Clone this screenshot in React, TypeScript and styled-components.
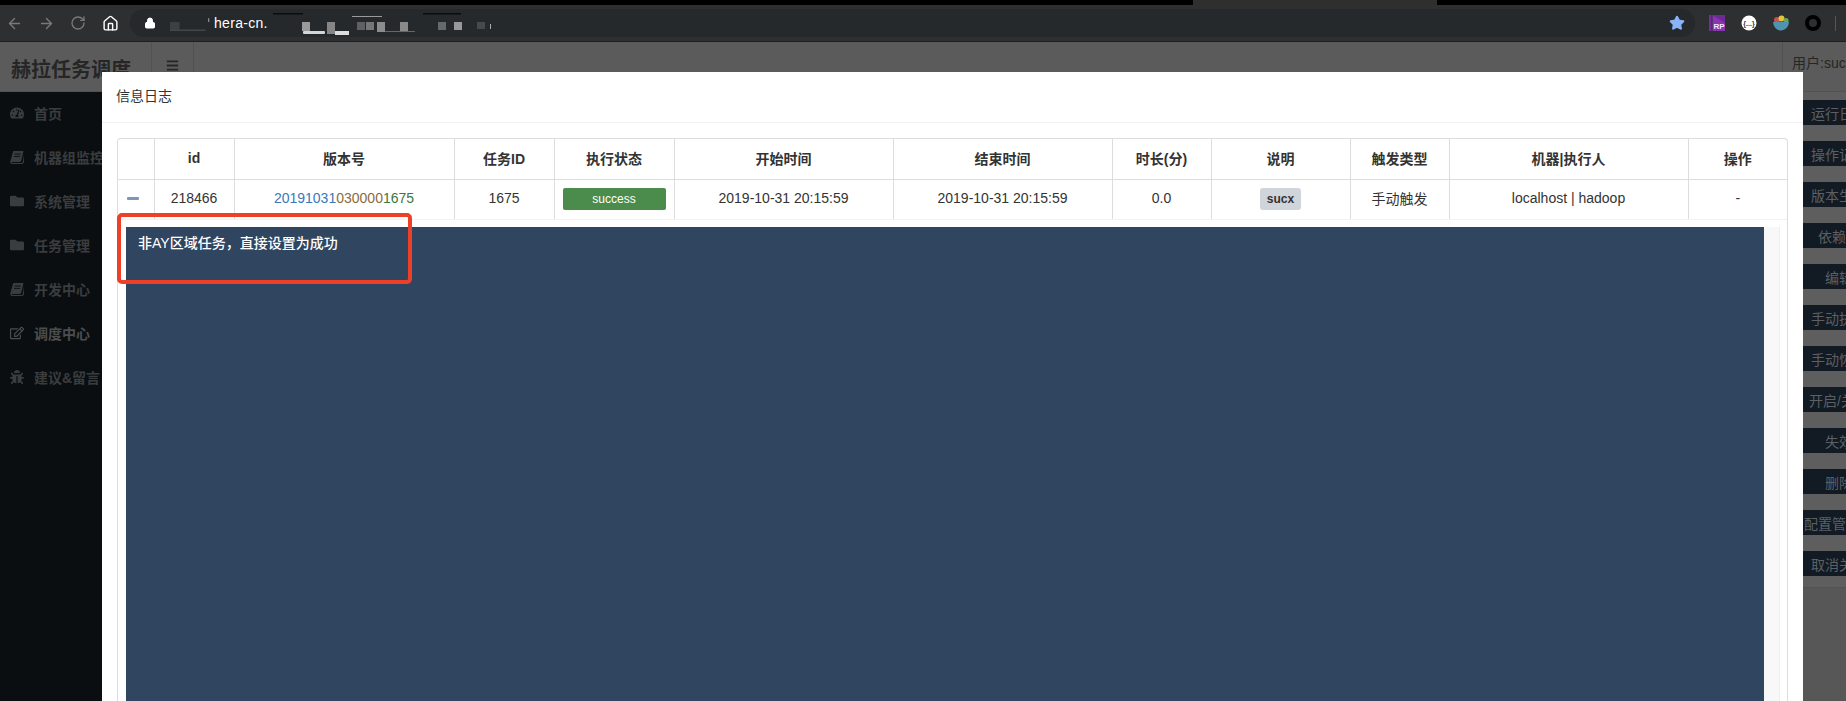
import styled, { createGlobalStyle } from 'styled-components';
import { ArrowLeft, ArrowRight, RotateCw, Home, Lock, Star } from 'lucide-react';
import { FaTachometerAlt, FaFolder, FaRegEdit, FaBug, FaBars } from 'react-icons/fa';
import type { ReactNode } from 'react';

const GlobalStyle = createGlobalStyle`
  html, body {
    margin: 0;
    padding: 0;
    background: #575757;
    overflow: hidden;
  }
  * {
    box-sizing: border-box;
  }
`;

const FONT = `"Liberation Sans", "Noto Sans CJK SC", Arial, sans-serif`;

const Screen = styled.div`
  position: relative;
  width: 1846px;
  height: 701px;
  overflow: hidden;
  display: flex;
  flex-direction: column;
  font-family: ${FONT};
  font-size: 14px;
`;

/* browser chrome */
const TabStrip = styled.div`
  height: 5px;
  display: flex;
  background: #000;
`;
const ActiveTab = styled.div`
  width: 244px;
  margin-left: 1193px;
  background: #2f2f2e;
`;
const Toolbar = styled.div`
  height: 37px;
  display: flex;
  align-items: center;
  padding: 0 10px 0 6px;
  background: #2e2f31;
  border-bottom: 1px solid #1d1e1f;
`;
const NavButton = styled.span<{ $on?: boolean }>`
  width: 17px;
  height: 17px;
  margin-right: 15px;
  display: flex;
  color: ${(p) => (p.$on ? '#fff' : '#77797b')};
`;
const UrlBar = styled.div`
  flex: 1;
  height: 28px;
  margin-left: -4px;
  padding: 0 10px 0 13px;
  display: flex;
  align-items: center;
  background: #25292c;
  border-radius: 14px;
  color: #fff;
  font-size: 14px;
  letter-spacing: 0.3px;
`;
const LockIcon = styled(Lock)`
  margin-right: 14px;
  margin-left: 1px;
  fill: #fff;
`;
const UrlEnd = styled.span`
  margin-left: auto;
  display: flex;
`;
const Extensions = styled.div`
  margin-left: 14px;
  display: flex;
  align-items: center;
  gap: 16px;
`;
const ToolbarDivider = styled.span`
  width: 1px;
  height: 15px;
  margin-left: -2px;
  background: #55585a;
`;

/* page under the dialog, dimmed */
const TopBar = styled.header`
  height: 50px;
  display: flex;
  align-items: stretch;
  background: #5b5b5b;
  border-bottom: 1px solid #525252;
  color: #262626;
`;
const Brand = styled.div`
  width: 152px;
  padding: 4px 0 0 11px;
  display: flex;
  align-items: center;
  font-size: 20px;
  font-weight: 700;
  border-right: 1px solid #525252;
`;
const MenuToggle = styled.div`
  width: 42px;
  padding: 0 0 3px 14px;
  display: flex;
  align-items: center;
  border-right: 1px solid #525252;
`;
const UserInfo = styled.div`
  margin-left: auto;
  width: 64px;
  padding: 0 0 10px 9px;
  display: flex;
  align-items: center;
  border-left: 1px solid #525252;
  white-space: nowrap;
  overflow: hidden;
`;
const Body = styled.div`
  flex: 1;
  display: flex;
  min-height: 0;
`;
const Sidebar = styled.nav`
  width: 180px;
  background: #0a0e10;
`;
const SideItem = styled.div<{ $active?: boolean }>`
  height: 44px;
  padding: 0 0 2px 10px;
  display: flex;
  align-items: center;
  gap: 10px;
  font-weight: 700;
  white-space: nowrap;
  color: ${(p) => (p.$active ? '#4b4e50' : '#3a3d3f')};
`;
const Content = styled.main`
  flex: 1;
  background: #575757;
`;
const ActionPanel = styled.aside`
  width: 43px;
  height: 496px;
  padding-top: 8px;
  display: flex;
  flex-direction: column;
  gap: 16px;
  overflow: hidden;
  background: #5e5e5e;
  border-bottom: 1px solid #525252;
`;
const ActionButton = styled.div`
  flex: none;
  width: 72px;
  height: 25px;
  display: flex;
  align-items: center;
  justify-content: center;
  white-space: nowrap;
  background: #121a24;
  color: #5c6064;
`;

/* dialog */
const Modal = styled.section`
  position: absolute;
  left: 102px;
  top: 72px;
  width: 1701px;
  bottom: 0;
  display: flex;
  flex-direction: column;
  background: #fff;
`;
const ModalHeader = styled.div`
  height: 51px;
  padding: 0 14px 5px;
  display: flex;
  align-items: center;
  color: #333;
  border-bottom: 1px solid #f2f2f2;
`;
const ModalBody = styled.div`
  flex: 1;
  min-height: 0;
  padding: 15px 15px 0;
`;
const TableBox = styled.div`
  height: 100%;
  display: flex;
  flex-direction: column;
  border: 1px solid #ddd;
  border-bottom: 0;
  border-radius: 4px 4px 0 0;
`;
const LogTable = styled.table`
  width: 100%;
  table-layout: fixed;
  border-collapse: collapse;
  color: #333;
  text-align: center;
`;
const HeadCell = styled.th`
  height: 40px;
  padding: 0 0 2px;
  font-weight: 700;
  border-left: 1px solid #ddd;
  border-bottom: 1px solid #ddd;
  &:first-child {
    border-left: 0;
  }
`;
const Cell = styled.td`
  height: 40px;
  padding: 0 0 2px;
  border-left: 1px solid #ddd;
  border-bottom: 1px solid #f2f2f2;
  &:first-child {
    border-left: 0;
  }
`;
const CollapseIcon = styled.span`
  display: block;
  width: 12px;
  height: 3px;
  margin: 0 0 0 9px;
  border-radius: 1px;
  background: #7f95b5;
`;
const VersionPart = styled.span<{ $color: string }>`
  color: ${(p) => p.$color};
`;
const StatusBadge = styled.span`
  display: block;
  height: 22px;
  margin: 2px 8px 0;
  border-radius: 2px;
  background: #4b8b4b;
  color: #fff;
  font-size: 12px;
  line-height: 22px;
`;
const NoteBadge = styled.span`
  display: inline-block;
  height: 22px;
  margin-top: 2px;
  padding: 0 7px;
  border-radius: 3px;
  background: #d0d4db;
  color: #333;
  font-size: 12px;
  font-weight: 700;
  line-height: 22px;
`;
const DetailRow = styled.div`
  flex: 1;
  min-height: 0;
  padding: 7px 7px 0 8px;
  display: flex;
`;
const LogPanel = styled.pre`
  flex: 1;
  margin: 0;
  padding: 6px 12px;
  background: #304560;
  color: #fff;
  font-family: ${FONT};
  font-size: 14px;
  font-weight: 500;
  line-height: 20px;
`;
const ScrollGutter = styled.div`
  width: 16px;
  background: #f8f8f8;
  border-right: 1px solid #eeeeee;
`;
const Annotation = styled.div`
  position: absolute;
  left: 15px;
  top: 141px;
  width: 295px;
  height: 71px;
  border: 4px solid #ee4026;
  border-radius: 5px;
`;

const COLUMNS = [
  { title: '', width: 36 },
  { title: 'id', width: 80 },
  { title: '版本号', width: 220 },
  { title: '任务ID', width: 100 },
  { title: '执行状态', width: 120 },
  { title: '开始时间', width: 219 },
  { title: '结束时间', width: 219 },
  { title: '时长(分)', width: 99 },
  { title: '说明', width: 139 },
  { title: '触发类型', width: 99 },
  { title: '机器|执行人', width: 239 },
  { title: '操作', width: 99 },
];

const BookIcon = () => (
  <svg width="14" height="14" viewBox="0 0 14 14">
    <path
      d="M3.2 1h10.3l-2.2 9.6c-.2.9-.7 1.4-1.7 1.4H2.4c-.8 0-1 .9-.2.9h9.6c.5 0 .8-.3 1-.8L14 4.4v7.9l-.6.9c-.3.5-.8.8-1.5.8H2.2C.8 14 0 13 .3 11.6z"
      fill="currentColor"
    />
    <path d="M4.6 4h6.2M4 6.4h6.2" stroke="#0a0e10" strokeWidth="0.9" />
  </svg>
);

const SIDE_ITEMS: { label: string; icon: ReactNode; active?: boolean }[] = [
  { label: '首页', icon: <FaTachometerAlt size={14} /> },
  { label: '机器组监控', icon: <BookIcon /> },
  { label: '系统管理', icon: <FaFolder size={14} /> },
  { label: '任务管理', icon: <FaFolder size={14} /> },
  { label: '开发中心', icon: <BookIcon /> },
  { label: '调度中心', icon: <FaRegEdit size={14} />, active: true },
  { label: '建议&留言', icon: <FaBug size={14} /> },
];

const ACTIONS = [
  '运行日志',
  '操作记录',
  '版本生成',
  '依赖图',
  '编辑',
  '手动执行',
  '手动恢复',
  '开启/关闭',
  '失效',
  '删除',
  '配置管理员',
  '取消关注',
];

const UrlSmudgeLeft = () => (
  <svg width="44" height="28" viewBox="0 0 46 28">
    <rect x="0" y="13" width="10" height="8" fill="#3d4042" />
    <rect x="0" y="21" width="37" height="1" fill="#55585a" />
    <rect x="40" y="9" width="1" height="4" fill="#aaa" />
  </svg>
);

const UrlSmudgeRight = () => (
  <svg width="232" height="28" viewBox="0 0 222 28">
    <rect x="0" y="4" width="30" height="1.5" fill="#0b0c0d" />
    <rect x="29" y="13" width="8" height="9" fill="#9a9a9a" />
    <rect x="30" y="22" width="22" height="3" rx="1" fill="#d5d5d5" />
    <rect x="54" y="13" width="8" height="12" fill="#858585" />
    <rect x="62" y="22" width="14" height="4" fill="#dddddd" />
    <rect x="79" y="7" width="30" height="1" fill="#9a9a9a" />
    <rect x="84" y="13" width="8" height="8" fill="#5e6163" />
    <rect x="93" y="13" width="8" height="8" fill="#767676" />
    <rect x="104" y="13" width="8" height="10" fill="#8c8c8c" />
    <rect x="127" y="13" width="8" height="9" fill="#8a8a8a" />
    <rect x="112" y="22" width="30" height="1" fill="#666" />
    <rect x="150" y="4" width="38" height="1.5" fill="#0b0c0d" />
    <rect x="165" y="13" width="8" height="8" fill="#66696b" />
    <rect x="181" y="13" width="8" height="8" fill="#999" />
    <rect x="204" y="13" width="8" height="7" fill="#474a4c" />
    <rect x="217" y="15" width="1" height="5" fill="#aaa" />
  </svg>
);

const RpIcon = () => (
  <svg width="16" height="16" viewBox="0 0 16 16">
    <rect x="0" y="0" width="2.5" height="16" fill="#7a2a9e" />
    <rect x="3.5" y="0" width="12.5" height="16" fill="#8a34b4" />
    <path d="M3.5 0h12.5v8z" fill="#6d2a92" />
    <text x="4.5" y="14" fontFamily="Liberation Sans" fontSize="8" fontWeight="700" fill="#f3e6fa">
      RP
    </text>
  </svg>
);

const JsonIcon = () => (
  <svg width="16" height="16" viewBox="0 0 16 16">
    <circle cx="8" cy="8" r="7.5" fill="#fff" />
    <text x="8" y="10.5" textAnchor="middle" fontFamily="Liberation Sans" fontSize="7" fontWeight="700" fill="#333">
      {'{...}'}
    </text>
  </svg>
);

const BowlIcon = () => (
  <svg width="16" height="16" viewBox="0 0 16 16">
    <circle cx="4" cy="5" r="3" fill="#c8524a" />
    <circle cx="8.5" cy="3.5" r="3" fill="#e8c23f" />
    <circle cx="13" cy="5.5" r="2.6" fill="#6aa84f" />
    <path d="M0 7h16a8 8.5 0 0 1-16 0z" fill="#4f93ae" />
  </svg>
);

const RingIcon = () => (
  <svg width="16" height="16" viewBox="0 0 16 16">
    <circle cx="8" cy="8" r="6" fill="none" stroke="#000" strokeWidth="4" />
  </svg>
);

const App = () => {
  return (
    <Screen>
      <GlobalStyle />
      <TabStrip>
        <ActiveTab />
      </TabStrip>
      <Toolbar>
        <NavButton><ArrowLeft size={17} /></NavButton>
        <NavButton><ArrowRight size={17} /></NavButton>
        <NavButton><RotateCw size={16} /></NavButton>
        <NavButton $on><Home size={17} /></NavButton>
        <UrlBar>
          <LockIcon size={12} />
          <UrlSmudgeLeft />
          hera-cn.
          <UrlSmudgeRight />
          <UrlEnd>
            <Star size={16} fill="#8ab4f8" color="#8ab4f8" />
          </UrlEnd>
        </UrlBar>
        <Extensions>
          <RpIcon />
          <JsonIcon />
          <BowlIcon />
          <RingIcon />
          <ToolbarDivider />
        </Extensions>
      </Toolbar>

      <TopBar>
        <Brand>赫拉任务调度</Brand>
        <MenuToggle><FaBars size={13} /></MenuToggle>
        <UserInfo>用户:sucx</UserInfo>
      </TopBar>
      <Body>
        <Sidebar>
          {SIDE_ITEMS.map((item) => (
            <SideItem key={item.label} $active={item.active}>
              {item.icon}
              {item.label}
            </SideItem>
          ))}
        </Sidebar>
        <Content />
        <ActionPanel>
          {ACTIONS.map((label) => (
            <ActionButton key={label}>{label}</ActionButton>
          ))}
        </ActionPanel>
      </Body>

      <Modal>
        <ModalHeader>信息日志</ModalHeader>
        <ModalBody>
          <TableBox>
            <LogTable>
              <colgroup>
                {COLUMNS.map((col, i) => (
                  <col key={i} width={col.width} />
                ))}
              </colgroup>
              <thead>
                <tr>
                  {COLUMNS.map((col, i) => (
                    <HeadCell key={i}>{col.title}</HeadCell>
                  ))}
                </tr>
              </thead>
              <tbody>
                <tr>
                  <Cell><CollapseIcon /></Cell>
                  <Cell>218466</Cell>
                  <Cell>
                    <VersionPart $color="#3b78b8">20191031</VersionPart>
                    <VersionPart $color="#8a6d3b">030000</VersionPart>
                    <VersionPart $color="#3c763d">1675</VersionPart>
                  </Cell>
                  <Cell>1675</Cell>
                  <Cell><StatusBadge>success</StatusBadge></Cell>
                  <Cell>2019-10-31 20:15:59</Cell>
                  <Cell>2019-10-31 20:15:59</Cell>
                  <Cell>0.0</Cell>
                  <Cell><NoteBadge>sucx</NoteBadge></Cell>
                  <Cell>手动触发</Cell>
                  <Cell>localhost | hadoop</Cell>
                  <Cell>-</Cell>
                </tr>
              </tbody>
            </LogTable>
            <DetailRow>
              <LogPanel>非AY区域任务，直接设置为成功</LogPanel>
              <ScrollGutter />
            </DetailRow>
          </TableBox>
        </ModalBody>
        <Annotation />
      </Modal>
    </Screen>
  );
};

export default App;
